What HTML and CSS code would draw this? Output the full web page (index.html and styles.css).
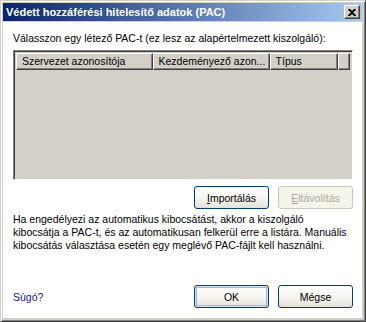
FILE: index.html
```html
<!DOCTYPE html>
<html lang="hu">
<head>
  <meta charset="UTF-8" />
  <title>Védett hozzáférési hitelesítő adatok (PAC)</title>
  <link rel="stylesheet" href="styles.css">
</head>
<body>
  <div class="window">
    <div class="titlebar">
      <span class="title">Védett hozzáférési hitelesítő adatok (PAC)</span>
      <button class="close-btn" aria-label="Bezárás">
        <svg width="8" height="7" viewBox="0 0 8 7"><path d="M0 0h2l2 2 2-2h2v1L5 3.5 8 6v1H6L4 5 2 7H0V6l3-2.5L0 1z" fill="#000"/></svg>
      </button>
    </div>

    <div class="client">
      <p class="label">Válasszon egy létező PAC-t (ez lesz az alapértelmezett kiszolgáló):</p>

      <div class="listview">
        <div class="list-header">
          <div class="col col-org">Szervezet azonosítója</div>
          <div class="col col-init">Kezdeményező azon...</div>
          <div class="col col-type">Típus</div>
          <div class="col col-rest"></div>
        </div>
        <div class="list-body"></div>
      </div>

      <div class="btn-row">
        <button class="btn"><u>I</u>mportálás</button>
        <button class="btn disabled"><u>E</u>ltávolítás</button>
      </div>

      <p class="info">Ha engedélyezi az automatikus kibocsátást, akkor a kiszolgáló<br>kibocsátja a PAC-t, és az automatikusan felkerül erre a listára. Manuális<br>kibocsátás választása esetén egy meglévő PAC-fájlt kell használni.</p>

      <div class="footer">
        <a class="help" href="#">Súgó?</a>
        <div class="btn-pair">
          <button class="btn default">OK</button>
          <button class="btn">Mégse</button>
        </div>
      </div>
    </div>
  </div>
</body>
</html>
```

FILE: styles.css
```css
* {
  box-sizing: border-box;
}
body {
  margin: 0;
  font-family: "Liberation Sans", Arial, sans-serif;
  font-size: 10.5px;
  color: #000;
  background: #fff;
}
.window {
  width: 366px;
  height: 322px;
  background: #d4d0c8;
  border: 1px solid;
  border-color: #d4d0c8 #404040 #404040 #d4d0c8;
  box-shadow: inset 1px 1px #fff, inset -1px -1px #808080;
  padding: 2px 3px 3px 2px;
  display: flex;
  flex-direction: column;
}
.titlebar {
  height: 18px;
  background: linear-gradient(to right, #0a246a, #a6caf0);
  display: flex;
  align-items: center;
  justify-content: space-between;
  padding: 0 2px 0 3px;
}
.title {
  color: #fff;
  font-weight: bold;
  font-size: 11px;
  font-family: "Liberation Sans", Arial, sans-serif;
}
.close-btn {
  width: 16px;
  height: 14px;
  padding: 0;
  border: 1px solid;
  border-color: #fff #404040 #404040 #fff;
  box-shadow: inset -1px -1px #808080;
  background: #d4d0c8;
  display: flex;
  align-items: center;
  justify-content: center;
}
.client {
  flex: 1;
  background: #fff;
  margin-top: 1px;
  padding: 10px 9px 0 10px;
  display: flex;
  flex-direction: column;
}
.label {
  margin: 0 0 5px;
  line-height: 13px;
}
.listview {
  height: 130px;
  border: 1px solid;
  border-color: #808080 #fff #fff #808080;
  box-shadow: inset 1px 1px #404040, inset -1px -1px #d4d0c8;
  background: #d4d0c8;
  padding: 2px;
  display: flex;
  flex-direction: column;
}
.list-header {
  display: flex;
  height: 17px;
}
.col {
  border: 1px solid;
  border-color: #fff #404040 #404040 #fff;
  box-shadow: inset -1px -1px #808080;
  padding: 1px 5px 0;
  line-height: 13px;
  white-space: nowrap;
  overflow: hidden;
}
.col-org { width: 140px; }
.col-init { width: 120px; }
.col-type { width: 70px; }
.col-rest { flex: 1; }
.list-body {
  flex: 1;
}
.btn-row {
  display: flex;
  justify-content: flex-end;
  gap: 9px;
  margin-top: 6px;
}
.btn {
  width: 75px;
  height: 23px;
  font: inherit;
  color: #000;
  border: 1px solid #003c74;
  border-radius: 3px;
  background: linear-gradient(#fff, #f4f3ee 60%, #e3e1d6);
  padding: 0;
}
.btn.disabled {
  color: #aca899;
  border-color: #c9c7ba;
  background: #f5f4ea;
}
.btn.default {
  box-shadow: inset 0 0 0 1px #cee7ff, inset 0 0 0 2px #98b8ea;
}
.info {
  margin: 4px 0 0;
  line-height: 13px;
  white-space: nowrap;
}
.footer {
  margin-top: auto;
  margin-bottom: 10px;
  display: flex;
  align-items: center;
  justify-content: space-between;
}
.help {
  color: #14148c;
  text-decoration: none;
}
.btn-pair {
  display: flex;
  gap: 9px;
}
```
